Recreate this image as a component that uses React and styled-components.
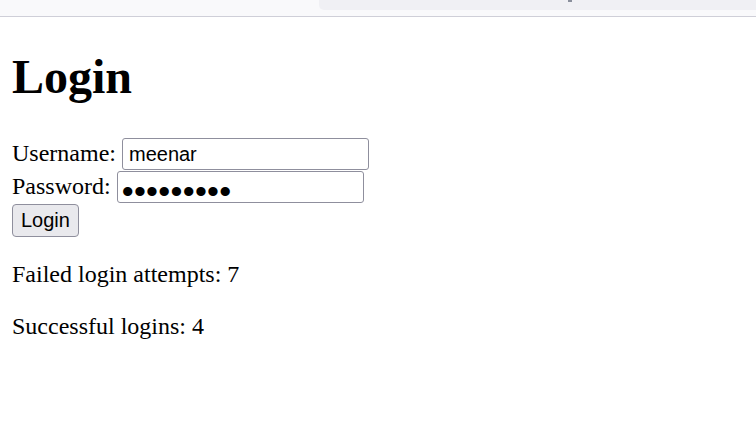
import React, { useState } from 'react';
import styled, { createGlobalStyle } from 'styled-components';

const GlobalStyle = createGlobalStyle`
  html, body {
    margin: 0;
    padding: 0;
    background: #ffffff;
  }
  body {
    font-family: "Liberation Serif", "Times New Roman", serif;
    color: #000;
  }
`;

const BrowserStrip = styled.div`
  height: 16px;
  background: #f9f9fb;
  border-bottom: 1px solid #cfcfd8;
  display: flex;
  justify-content: flex-end;
`;

const UrlBarEdge = styled.div`
  width: 437px;
  height: 10px;
  background: #f0f0f4;
  border-bottom-left-radius: 5px;
  position: relative;
`;

const CutGlyph = styled.span`
  position: absolute;
  left: 249px;
  top: 0;
  width: 4px;
  height: 2px;
  background: #8a8f9c;
`;

const Page = styled.main`
  padding: 0 12px;
`;

const Title = styled.h1`
  margin: 32px 0;
  font-size: 48px;
  font-weight: bold;
  line-height: 55px;
`;

const Form = styled.form`
  display: flex;
  flex-direction: column;
  align-items: flex-start;
  gap: 1px;
  padding-top: 2px;
`;

const Row = styled.div`
  display: flex;
  align-items: center;
  gap: 6px;
  height: 32px;
`;

const Label = styled.label`
  font-size: 24px;
  line-height: 24px;
  margin-bottom: 2px;
`;

const Field = styled.input`
  box-sizing: border-box;
  width: 247px;
  height: 32px;
  padding: ${(p) => (p.$masked ? '8px 4px 0' : '0 6px')};
  border: 1px solid #8f8f9d;
  border-radius: 3px;
  background: #fff;
  font-family: "Liberation Sans", Arial, sans-serif;
  font-size: ${(p) => (p.$masked ? '34px' : '20px')};
  letter-spacing: ${(p) => (p.$masked ? '0.3px' : 'normal')};
  color: #000;
  outline: none;
`;

const SubmitButton = styled.button`
  box-sizing: border-box;
  height: 33px;
  padding: 0 8px;
  border: 1px solid #8f8f9d;
  border-radius: 4px;
  background: #e9e9ed;
  font-family: "Liberation Sans", Arial, sans-serif;
  font-size: 20px;
  color: #000;
`;

const Stat = styled.p`
  margin: 24px 0;
  font-size: 24px;
  line-height: 27.6px;
`;

export default function App() {
  const [username, setUsername] = useState('meenar');
  const [password, setPassword] = useState('secretpw1');
  const stats = { failed: 7, success: 4 };

  return (
    <>
      <GlobalStyle />
      <BrowserStrip>
        <UrlBarEdge>
          <CutGlyph />
        </UrlBarEdge>
      </BrowserStrip>
      <Page>
        <Title>Login</Title>
        <Form onSubmit={(e) => e.preventDefault()}>
          <Row>
            <Label htmlFor="username">Username:</Label>
            <Field
              id="username"
              type="text"
              value={username}
              onChange={(e) => setUsername(e.target.value)}
            />
          </Row>
          <Row>
            <Label htmlFor="password">Password:</Label>
            <Field
              $masked
              id="password"
              type="password"
              value={password}
              onChange={(e) => setPassword(e.target.value)}
            />
          </Row>
          <SubmitButton type="submit">Login</SubmitButton>
        </Form>
        <Stat>Failed login attempts: {stats.failed}</Stat>
        <Stat>Successful logins: {stats.success}</Stat>
      </Page>
    </>
  );
}
